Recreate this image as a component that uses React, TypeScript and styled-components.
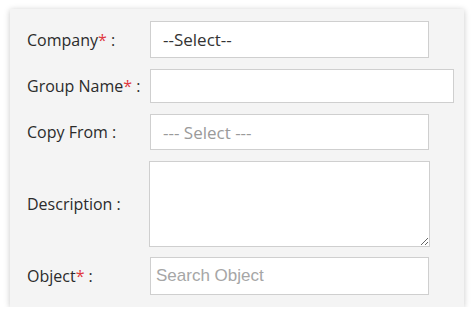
import React from "react";
import styled, { createGlobalStyle } from "styled-components";

const GlobalStyle = createGlobalStyle`
  html, body {
    margin: 0;
    padding: 0;
    background: #ffffff;
  }
  body {
    font-family: "Open Sans", "Liberation Sans", sans-serif;
    color: #333;
  }
`;

type Field = {
  label: string;
  required?: boolean;
  kind: "select" | "input" | "textarea" | "search";
  value?: string;
  placeholder?: string;
  height: number;
  wide?: boolean;
};

const fields: Field[] = [
  { label: "Company", required: true, kind: "select", value: "--Select--", height: 37 },
  { label: "Group Name", required: true, kind: "input", wide: true, height: 34 },
  { label: "Copy From", kind: "select", placeholder: "--- Select ---", height: 36 },
  { label: "Description", kind: "textarea", height: 86 },
  { label: "Object", required: true, kind: "search", placeholder: "Search Object", height: 38 },
];

export default function App() {
  return (
    <>
      <GlobalStyle />
      <Panel>
        {fields.map((f) => (
          <Row key={f.label}>
            <Label>
              {f.label}
              {f.required && <Star>*</Star>}
              {" :"}
            </Label>
            {f.kind === "textarea" ? (
              <TextArea $h={f.height} />
            ) : f.kind === "search" ? (
              <SearchInput $h={f.height} placeholder={f.placeholder} />
            ) : f.kind === "select" ? (
              <SelectBox
                $h={f.height}
                readOnly
                value={f.value ?? ""}
                placeholder={f.placeholder}
              />
            ) : (
              <TextInput $h={f.height} $wide={f.wide} />
            )}
          </Row>
        ))}
      </Panel>
    </>
  );
}

const Panel = styled.div`
  margin: 9px 0 0 10px;
  width: 454px;
  box-sizing: border-box;
  padding: 12px 0;
  background: #f4f4f4;
  box-shadow: 0 1px 6px rgba(0, 0, 0, 0.22);
  display: flex;
  flex-direction: column;
  gap: 11px;
`;

const Row = styled.div`
  display: grid;
  grid-template-columns: 140px auto;
  align-items: center;
  &:last-child {
    margin-top: -1px;
  }
`;

const Label = styled.label`
  padding-left: 17px;
  font-size: 16px;
  color: #2b2b2b;
  white-space: nowrap;
`;

const Star = styled.span`
  color: #e0383e;
`;

const boxBase = `
  box-sizing: border-box;
  display: block;
  border: 1px solid #cfcfcf;
  background: #fff;
  outline: none;
  margin: 0;
`;

const SelectBox = styled.input<{ $h: number }>`
  ${boxBase}
  width: 279px;
  height: ${(p) => p.$h}px;
  padding: 0 12px;
  font-family: "Open Sans", sans-serif;
  font-size: 17px;
  color: #333;
  &::placeholder {
    color: #9a9a9a;
  }
`;

const TextInput = styled.input<{ $h: number; $wide?: boolean }>`
  ${boxBase}
  width: ${(p) => (p.$wide ? "304px" : "279px")};
  height: ${(p) => p.$h}px;
  padding: 0 8px;
  font-family: "Open Sans", sans-serif;
  font-size: 16px;
`;

const TextArea = styled.textarea<{ $h: number }>`
  ${boxBase}
  width: 281px;
  height: ${(p) => p.$h}px;
  margin-left: -1px;
  resize: both;
  font-family: "Open Sans", sans-serif;
  font-size: 16px;
`;

const SearchInput = styled.input<{ $h: number }>`
  ${boxBase}
  width: 279px;
  height: ${(p) => p.$h}px;
  padding: 0 5px;
  font-family: "Liberation Sans", Arial, sans-serif;
  font-size: 17px;
  color: #333;
  &::placeholder {
    color: #a6a6a6;
  }
`;
